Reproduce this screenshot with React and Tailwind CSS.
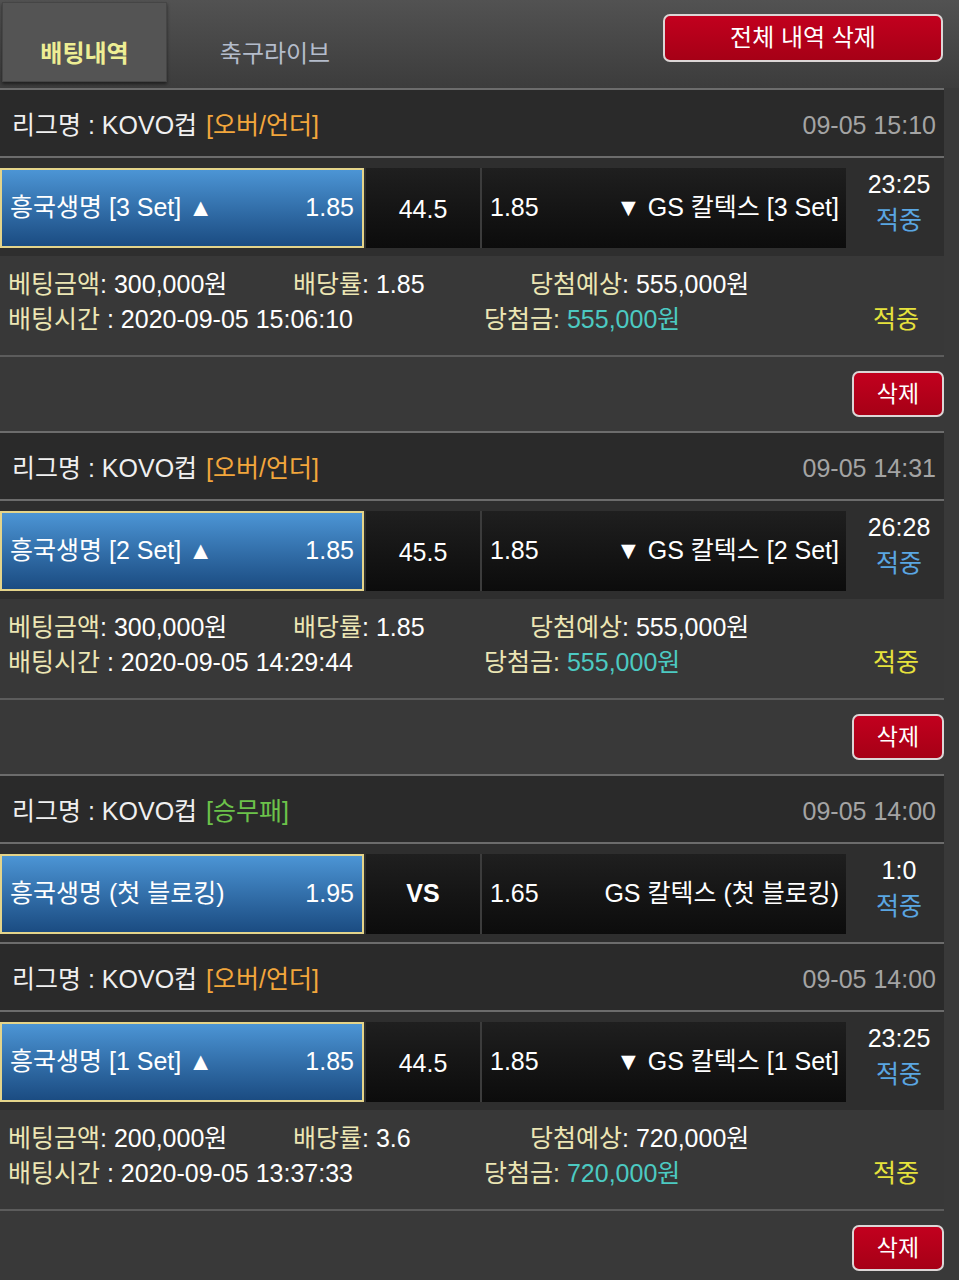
import React from 'react';

const bets = [
  {
    type: '[오버/언더]',
    typeColor: 'text-[#f2a63c]',
    date: '09-05 15:10',
    home: '흥국생명 [3 Set] ▲',
    homeOdds: '1.85',
    mid: '44.5',
    awayOdds: '1.85',
    away: '▼ GS 칼텍스 [3 Set]',
    score: '23:25',
    details: {
      amount: '300,000원',
      rate: '1.85',
      expect: '555,000원',
      time: '2020-09-05 15:06:10',
      win: '555,000원',
    },
  },
  {
    type: '[오버/언더]',
    typeColor: 'text-[#f2a63c]',
    date: '09-05 14:31',
    home: '흥국생명 [2 Set] ▲',
    homeOdds: '1.85',
    mid: '45.5',
    awayOdds: '1.85',
    away: '▼ GS 칼텍스 [2 Set]',
    score: '26:28',
    details: {
      amount: '300,000원',
      rate: '1.85',
      expect: '555,000원',
      time: '2020-09-05 14:29:44',
      win: '555,000원',
    },
  },
  {
    type: '[승무패]',
    typeColor: 'text-[#6cc24a]',
    date: '09-05 14:00',
    home: '흥국생명 (첫 블로킹)',
    homeOdds: '1.95',
    mid: 'VS',
    bold: true,
    awayOdds: '1.65',
    away: 'GS 칼텍스 (첫 블로킹)',
    score: '1:0',
  },
  {
    type: '[오버/언더]',
    typeColor: 'text-[#f2a63c]',
    date: '09-05 14:00',
    home: '흥국생명 [1 Set] ▲',
    homeOdds: '1.85',
    mid: '44.5',
    awayOdds: '1.85',
    away: '▼ GS 칼텍스 [1 Set]',
    score: '23:25',
    details: {
      amount: '200,000원',
      rate: '3.6',
      expect: '720,000원',
      time: '2020-09-05 13:37:33',
      win: '720,000원',
    },
  },
];

const DeleteButton = ({ wide, children }) => (
  <button
    className={`${wide ? 'w-[280px] h-[48px] text-[24px]' : 'w-[92px] h-[46px] text-[23px]'} rounded-[7px] border-2 border-[#dcd6d6] bg-linear-to-b from-[#c2001e] to-[#a60016] text-white leading-none`}
  >
    {children}
  </button>
);

const LeagueRow = ({ bet }) => (
  <div className="h-[70px] border-y-2 border-[#6c6c6c] bg-[#2a2a2a] flex items-center justify-between pt-[5px] pl-[12px] pr-[8px]">
    <div className="text-[#f0f0f0]">
      리그명 : KOVO컵 <span className={`ml-[2px] ${bet.typeColor}`}>{bet.type}</span>
    </div>
    <div className="text-[#a4a4a4]">{bet.date}</div>
  </div>
);

const MatchRow = ({ bet }) => (
  <div className="bg-[#2e2e2e] pt-[10px] pb-[8px] flex">
    <div className="w-[364px] h-[80px] border-2 border-[#e4d48a] bg-linear-to-b from-[#4c95d5] to-[#1b4c82] flex items-center justify-between pl-[8px] pr-[8px] text-white">
      <span>{bet.home}</span>
      <span>{bet.homeOdds}</span>
    </div>
    <div
      className={`ml-[2px] w-[116px] h-[80px] border-r-2 border-[#3c3c3c] bg-linear-to-b from-[#1f1f1f] to-[#0c0c0c] flex items-center justify-center text-white ${bet.bold ? 'font-bold' : 'pt-[4px]'}`}
    >
      {bet.mid}
    </div>
    <div className="w-[364px] h-[80px] bg-linear-to-b from-[#1f1f1f] to-[#0c0c0c] flex items-center justify-between pl-[8px] pr-[7px] text-white">
      <span>{bet.awayOdds}</span>
      <span>{bet.away}</span>
    </div>
    <div className="flex-1 flex flex-col items-center leading-[36px] -mt-[2px] pl-[8px]">
      <span className="text-white">{bet.score}</span>
      <span className="text-[#5aa6e2]">적중</span>
    </div>
  </div>
);

const Details = ({ d }) => (
  <>
    <div className="bg-[#383838] pt-[11px] pb-[18px] pl-[8px] leading-[35px]">
      <div className="flex">
        <div className="w-[285px]">
          <span className="text-[#ece6b4]">베팅금액</span>
          <span className="text-white">: {d.amount}</span>
        </div>
        <div className="w-[237px]">
          <span className="text-[#ece6b4]">배당률</span>
          <span className="text-white">: {d.rate}</span>
        </div>
        <div>
          <span className="text-[#ece6b4]">당첨예상</span>
          <span className="text-white">: {d.expect}</span>
        </div>
      </div>
      <div className="flex">
        <div className="w-[476px]">
          <span className="text-[#ece6b4]">배팅시간</span>
          <span className="text-white"> : {d.time}</span>
        </div>
        <div className="w-[389px]">
          <span className="text-[#ece6b4]">당첨금</span>
          <span className="text-[#ece6b4]">: </span>
          <span className="text-[#4ccac2]">{d.win}</span>
        </div>
        <div className="text-[#e6e23c]">적중</div>
      </div>
    </div>
    <div className="h-[2px] bg-[#5c5c5c]" />
    <div className="h-[74px] flex items-center justify-end">
      <DeleteButton>삭제</DeleteButton>
    </div>
  </>
);

export default function App() {
  return (
    <div
      className="min-h-screen w-[959px] bg-[#393939] text-[25px] overflow-hidden"
      style={{ fontFamily: '"Liberation Sans", "Noto Sans CJK KR", sans-serif' }}
    >
      <div className="h-[88px] bg-linear-to-b from-[#525252] via-[#474747] to-[#3c3c3c] flex pt-[2px] pl-[2px]">
        <div className="w-[165px] h-[80px] bg-[#545454] border border-[#454545] shadow-[0_2px_3px_rgba(0,0,0,0.5)] flex items-center justify-center pt-[24px] text-[#eeee94] text-[24px] font-bold">
          배팅내역
        </div>
        <div className="w-[216px] h-[80px] flex items-center justify-center pt-[24px] text-[#b4bccb] text-[24px]">
          축구라이브
        </div>
        <div className="flex-1 flex justify-end pt-[12px] pr-[16px]">
          <DeleteButton wide>전체 내역 삭제</DeleteButton>
        </div>
      </div>
      <div className="w-[944px]">
        {bets.map((bet, i) => (
          <div key={i}>
            <LeagueRow bet={bet} />
            <MatchRow bet={bet} />
            {bet.details && <Details d={bet.details} />}
          </div>
        ))}
      </div>
    </div>
  );
}
